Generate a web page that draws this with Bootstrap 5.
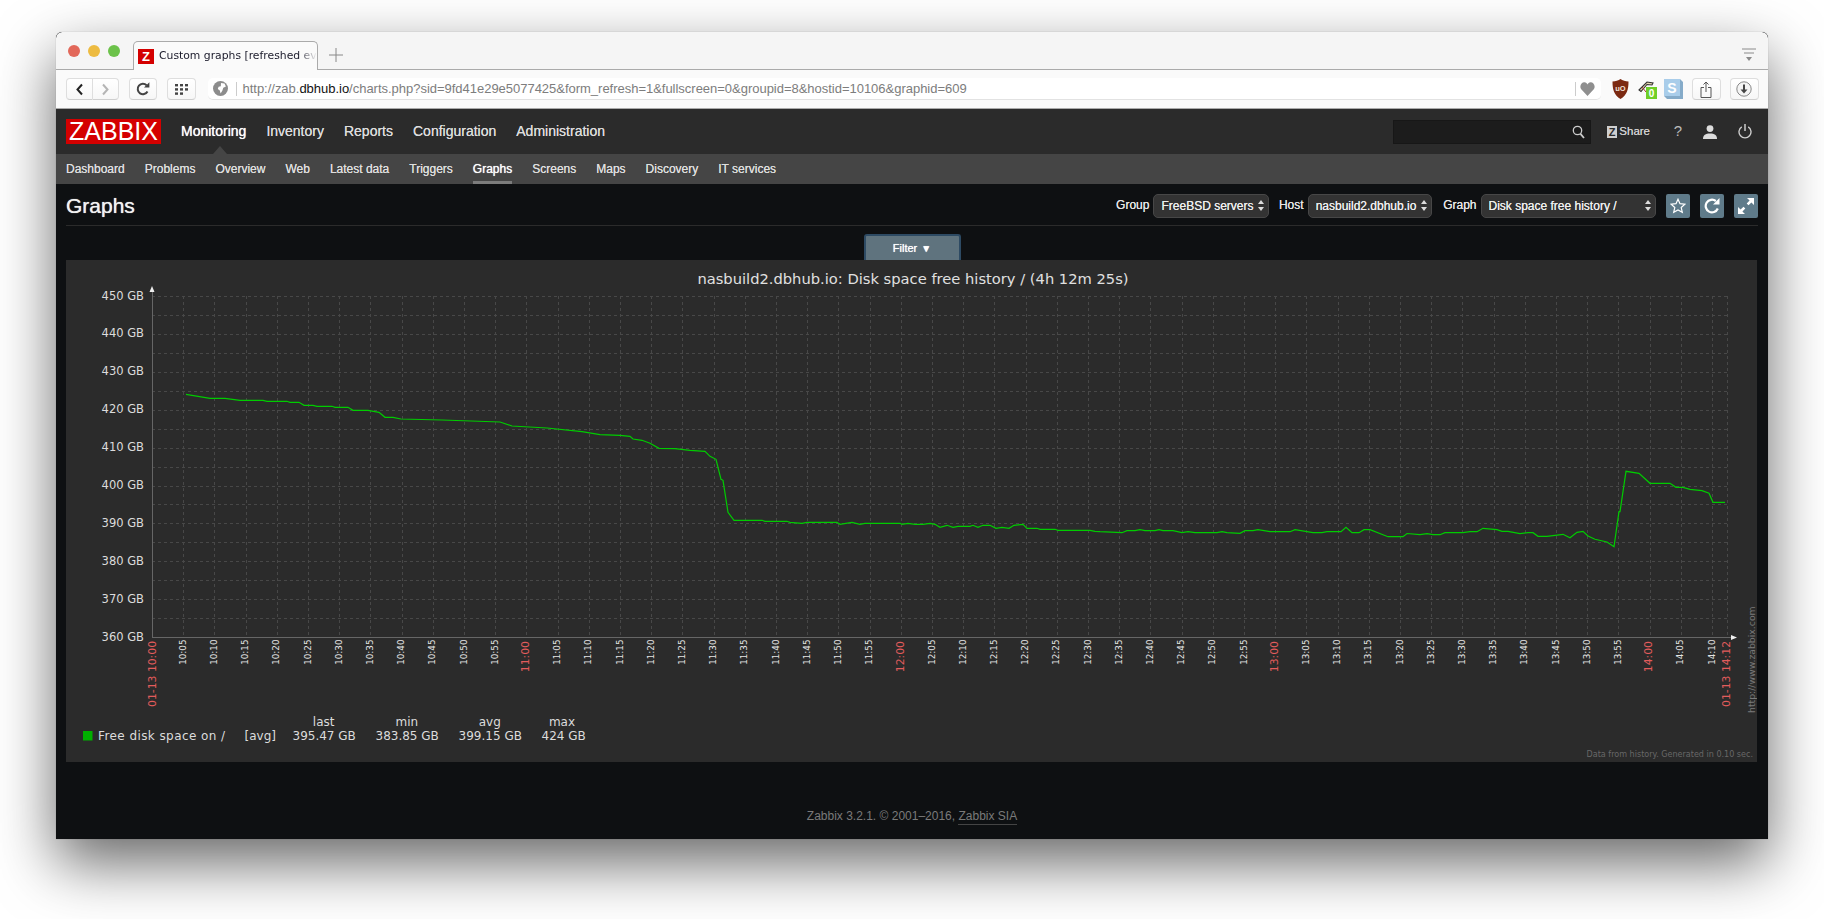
<!DOCTYPE html>
<html lang="en">
<head>
<meta charset="utf-8">
<title>Custom graphs</title>
<link href="https://cdn.jsdelivr.net/npm/bootstrap@5.3.0/dist/css/bootstrap.min.css" rel="stylesheet">
<style>
html,body{height:919px;overflow:hidden;background:#fff;font-family:"Liberation Sans",Arial,sans-serif}
.zwin{width:1712px;height:807px;margin:32px 0 0 56px;border-radius:6px 6px 0 0;box-shadow:0 24px 60px 0 rgba(0,0,0,.6),0 0 1px rgba(0,0,0,.4);background:#0e1012;overflow:hidden}
.ztabs{height:38px;background:#f5f5f5;border-bottom:1px solid #aaa;border-radius:6px 6px 0 0;padding-left:12px;position:relative}
.zdot{width:12px;height:12px;border-radius:50%;margin-right:8px}
.ztab{width:185px;height:29px;margin-left:5px;margin-bottom:-1px;background:#fafafa;border:1px solid #aaa;border-bottom:0;border-radius:5px 5px 0 0;align-self:flex-end;padding-left:4px;font-family:"DejaVu Sans",sans-serif;font-size:10.8px;color:#1a1a2a;overflow:hidden;white-space:nowrap}
.zfav{width:16px;height:15px;background:#d40000;color:#fff;font:bold 13px/15px "Liberation Sans",sans-serif;text-align:center;margin-right:5px;flex:none}
.zfade{width:158px;overflow:hidden;-webkit-mask-image:linear-gradient(90deg,#000 88%,transparent);mask-image:linear-gradient(90deg,#000 88%,transparent)}
.ztplus{margin-left:11px;margin-top:8px}
.ztmenu{margin-right:12px;margin-top:8px}
.ztbar{height:39px;background:#fafafa;border-bottom:1px solid #aaa;padding:0 9.5px 0 9.5px}
.zbtn{height:22px;background:linear-gradient(#fff,#f7f7f7);border:1px solid #dedede;border-bottom-color:#cfcfcf;border-radius:4px}
.zurl{height:22px;background:#fff;border-bottom:1px solid #e2e2e2;border-radius:5px;flex:1;font-size:13px;color:#7d7d7d;white-space:nowrap;margin:0 9px 0 12px;letter-spacing:-.02px}
.zurl b{font-weight:400;color:#111}
.zsep{width:1px;height:14px;background:#ccc}
.zhead{height:45px;background:#2b2b2b;padding:0 16px 0 10px}
.zlogo{width:95px;height:25px;background:#d40000;color:#fff;font-size:25px;line-height:25px;text-align:center;margin-right:20px}
.zmain a{color:#dcdcdc;font-size:14px;text-decoration:none;margin-right:20px;text-shadow:0 0 .6px #dcdcdc}
.zmain a.zon{color:#fff;text-shadow:0 0 .7px #fff}
.zsearch{width:198px;height:24px;background:#1c1c1c;border:1px solid #171717;margin-right:16px;padding-right:5px}
.zshare{font-size:11.5px;color:#cfcfcf;font-weight:400;text-shadow:0 0 .6px #cfcfcf;width:43px}
.zsz{background:#cfcfcf;color:#2b2b2b;font-weight:700;font-size:11px;line-height:12px;width:12px;height:12px;text-align:center;margin-right:2px;text-shadow:none}
.ztip{position:absolute;left:157px;top:37px;width:0;height:0;border:7.5px solid transparent;border-top:0;border-bottom:8px solid #454545}
.zsub{height:30px;background:#454545;padding-left:10px;position:relative}
.zsub a{color:#dedede;font-size:12px;text-decoration:none;margin-right:20px;height:30px;line-height:30px;text-shadow:0 0 .5px #dedede;padding-top:0}
.zsub a.zon{color:#fff;border-bottom:3px solid #7c7c7c;font-weight:400;text-shadow:0 0 .8px #fff}
.zbody{padding:0 10px;flex:1;min-height:0}
.ztitle{height:42px;border-bottom:1px solid #2b2b2b;color:#f2f2f2;padding-top:2px}
.ztitle h1{font-size:21px;font-weight:400;margin:0;line-height:1;text-shadow:0 0 .8px #f2f2f2}
.zlbl{font-size:12px;color:#e6e6e6;margin:-2px 4px 0 11px;text-shadow:0 0 .4px #e6e6e6}
.zlbl.zhostlbl{margin-left:9.5px}
.zsel.form-select{height:24px;min-height:24px;padding:0 0 0 7px;font-size:12px;line-height:22px;color:#eee;background-color:#333;background-image:url("data:image/svg+xml,%3Csvg xmlns='http://www.w3.org/2000/svg' width='6' height='11'%3E%3Cpath fill='%23ddd' d='M3 0l3 4H0zM3 11L0 7h6z'/%3E%3C/svg%3E");background-position:right 4px center;background-size:6px 11px;border:1px solid #474747;border-radius:5px;box-shadow:none;text-shadow:0 0 .3px #eee}
.zic{width:24px;height:24px;background:#5f7b8a;border-radius:2px;margin-left:10px;border:0;padding:0}
.zfilter{width:97px;height:26px;margin:8px auto 0;background:#5f737e;border:2px solid #2d4a63;border-bottom:0;border-radius:3px 3px 0 0;color:#fff;font-size:11px;line-height:24px;text-align:center;display:block;padding:0;text-shadow:0 0 .7px #fff}
.zfilter span{font-size:10px;margin-left:1px}
.zpanel{height:502px;width:1691px;background:#2b2b2b}
.zpanel svg{display:block}
.zpanel text{font-family:"DejaVu Sans",sans-serif}
.zfoot{height:77px;padding-top:47px;color:#7a7a7a;font-size:12px;line-height:15px}
.zfoot a{color:#7a7a7a;text-decoration:none;border-bottom:1px solid #444;height:16px}
</style>
</head>
<body>
<div class="zwin d-flex flex-column">
  <div class="ztabs d-flex align-items-center">
    <span class="zdot" style="background:#e2685a"></span><span class="zdot" style="background:#edbb41"></span><span class="zdot" style="background:#6cc24a"></span>
    <div class="ztab d-flex align-items-center"><span class="zfav">Z</span><span class="zfade">Custom graphs [refreshed ev</span></div>
    <svg class="ztplus" width="14" height="14" viewBox="0 0 14 14"><path d="M7 0v14M0 7h14" stroke="#888" fill="none"/></svg>
    <svg class="ms-auto ztmenu" width="14" height="14" viewBox="0 0 14 14"><path d="M0 1h14M2 5h10" stroke="#8a8a8a" fill="none"/><path d="M4 9h6l-3 4z" fill="#8a8a8a"/></svg>
  </div>
  <div class="ztbar d-flex align-items-center">
    <div class="d-flex">
      <span class="zbtn d-flex align-items-center justify-content-center" style="width:27px;border-radius:4px 0 0 4px"><svg width="9" height="13" viewBox="0 0 9 13"><path d="M7 1.5L2.5 6.5 7 11.5" stroke="#222" stroke-width="2" fill="none"/></svg></span>
      <span class="zbtn d-flex align-items-center justify-content-center" style="width:26.500px;border-left:0;border-radius:0 4px 4px 0"><svg width="9" height="13" viewBox="0 0 9 13"><path d="M2 1.5L6.5 6.5 2 11.5" stroke="#b5b5b5" stroke-width="2" fill="none"/></svg></span>
    </div>
    <span class="zbtn d-flex align-items-center justify-content-center" style="width:28.500px;margin-left:9.500px"><svg width="14" height="14" viewBox="0 0 14 14"><path d="M11.5 9.500A5.200 5.200 0 1 1 10.600 3.300" stroke="#444" stroke-width="2" fill="none"/><path d="M8 5.600h5.400V.2z" fill="#444"/></svg></span>
    <span class="zbtn d-flex align-items-center justify-content-center" style="width:29px;margin-left:9.500px"><svg width="13" height="11" viewBox="0 0 13 11" fill="#444"><rect width="3" height="2.400"/><rect x="5" width="3" height="2.400"/><rect x="10" width="3" height="2.400"/><rect y="4.200" width="3" height="2.400"/><rect x="5" y="4.200" width="3" height="2.400"/><rect x="10" y="4.200" width="3" height="2.400"/><rect y="8.400" width="3" height="2.400"/><rect x="5" y="8.400" width="3" height="2.400"/></svg></span>
    <div class="zurl d-flex align-items-center">
      <svg style="margin-left:5px;flex:none" width="15" height="15" viewBox="0 0 15 15"><circle cx="7.500" cy="7.500" r="7.500" fill="#8c8c8c"/><path d="M8 2l3.500.6 1.400 3-2.600 1.200-1 3-1.700 2.800-.8-3-2-1.500.8-2.300 2.200-.5z" fill="#fff"/></svg>
      <span class="zsep mx-2" style="flex:none"></span>
      <span class="flex-grow-1" style="margin-left:-2px">http://zab.<b>dbhub.io</b>/charts.php?sid=9fd41e29e5077425&amp;form_refresh=1&amp;fullscreen=0&amp;groupid=8&amp;hostid=10106&amp;graphid=609</span>
      <span class="zsep" style="flex:none"></span>
      <svg width="15" height="14" viewBox="0 0 15 14" style="flex:none;margin-left:4px;margin-right:6px"><path d="M7.500 14L1 7C-1 3.800 2 0 4.500 .3 6 .5 7 1.500 7.500 2.500 8 1.500 9 .5 10.500 .3 13 0 16 3.800 14 7z" fill="#8f8f8f"/></svg>
    </div>
    <svg width="17" height="20" viewBox="0 0 17 20" style="margin-left:2px"><path d="M8.500 0c2 1.500 5 2.200 8 2.500 0 8-1.500 13.500-8 17.500C2 16 .5 10.500.5 2.500 3.500 2.200 6.500 1.500 8.500 0z" fill="#7c2a12"/><text x="8.500" y="11.800" text-anchor="middle" font-size="7.500" font-weight="700" fill="#f3e2d8" font-family="Liberation Sans,sans-serif">uO</text></svg>
    <svg width="20" height="20" viewBox="0 0 20 20" style="margin-left:9px"><path d="M1 11L9 3l6 1-1 2-5-.5-6 7z" fill="#e8d8b0" stroke="#333" stroke-width="1.100"/><path d="M4 8l4 5" stroke="#a33" stroke-width="1"/><rect x="8" y="8" width="11" height="12" fill="#6fcf28"/><text x="13.500" y="18" font-size="10" text-anchor="middle" font-weight="700" fill="#fff" font-family="Liberation Sans,sans-serif">0</text></svg>
    <svg width="20" height="20" viewBox="0 0 20 20" style="margin-left:6px"><path d="M0 0h16l3 3v17H3l-3-3z" fill="#85abc9"/><rect width="16" height="17" fill="#a9cdea"/><text x="8" y="13.500" font-size="14" text-anchor="middle" font-weight="700" fill="#fff" font-family="Liberation Sans,sans-serif">S</text></svg>
    <span class="zbtn d-flex align-items-center justify-content-center" style="width:29px;margin-left:8px"><svg width="12" height="17" viewBox="0 0 12 17"><path d="M4 6.500H1v10h10v-10H8M6 11V1M3.500 3.500L6 1l2.500 2.500" stroke="#555" fill="none"/></svg></span>
    <span class="zbtn d-flex align-items-center justify-content-center" style="width:29px;margin-left:9px"><svg width="16" height="16" viewBox="0 0 16 16"><circle cx="8" cy="8" r="7.200" fill="#f4f4f4" stroke="#888"/><path d="M8 3.500v6" stroke="#444" stroke-width="2"/><path d="M4.500 8.500h7L8 12.500z" fill="#444"/></svg></span>
  </div>
  <div class="zhead d-flex align-items-center position-relative">
    <span class="zlogo">ZABBIX</span>
    <nav class="zmain d-flex">
      <a class="zon" href="#">Monitoring</a><a href="#">Inventory</a><a href="#">Reports</a><a href="#">Configuration</a><a href="#">Administration</a>
    </nav>
    <div class="zsearch d-flex align-items-center justify-content-end ms-auto"><svg width="13" height="14" viewBox="0 0 13 14"><circle cx="5.500" cy="5.500" r="4.200" stroke="#ccc" stroke-width="1.300" fill="none"/><path d="M8.500 8.800L12 13" stroke="#ccc" stroke-width="1.800"/></svg></div>
    <span class="zshare d-flex align-items-center"><span class="zsz">Z</span>Share</span>
    <span style="color:#bbb;font-size:15px;margin-left:23px;width:10px;text-align:center">?</span>
    <svg style="margin-left:20px" width="14" height="14" viewBox="0 0 14 14" fill="#dcdcdc"><circle cx="7" cy="3.600" r="3.400"/><path d="M0 14c0-4 2.500-5.500 7-5.500S14 10 14 14z"/></svg>
    <svg style="margin-left:21px" width="14" height="15" viewBox="0 0 14 15"><path d="M7 0v7" stroke="#ccc" stroke-width="1.500"/><path d="M3.800 2.800a6 6 0 1 0 6.400 0" stroke="#ccc" stroke-width="1.400" fill="none"/></svg>
    <span class="ztip"></span>
  </div>
  <nav class="zsub d-flex">
    <a href="#">Dashboard</a><a href="#">Problems</a><a href="#">Overview</a><a href="#">Web</a><a href="#">Latest data</a><a href="#">Triggers</a><a class="zon" href="#">Graphs</a><a href="#">Screens</a><a href="#">Maps</a><a href="#">Discovery</a><a href="#">IT services</a>
  </nav>
  <main class="zbody d-flex flex-column">
    <div class="ztitle d-flex align-items-center">
      <h1 class="flex-grow-1">Graphs</h1>
      <span class="zlbl">Group</span>
      <select class="zsel form-select" style="width:116px"><option>FreeBSD servers</option></select>
      <span class="zlbl zhostlbl">Host</span>
      <select class="zsel form-select" style="width:124.500px"><option>nasbuild2.dbhub.io</option></select>
      <span class="zlbl">Graph</span>
      <select class="zsel form-select" style="width:175.500px"><option>Disk space free history /</option></select>
      <button class="zic d-flex align-items-center justify-content-center" aria-label="Favourite"><svg width="16" height="16" viewBox="0 0 16 16"><path d="M8 1.200l2 4.500 4.900.5-3.700 3.300 1.100 4.800L8 12l-4.300 2.300 1.100-4.800L1.100 6.200 6 5.700z" fill="none" stroke="#fff" stroke-width="1.200"/></svg></button>
      <button class="zic d-flex align-items-center justify-content-center" aria-label="Refresh"><svg width="16" height="16" viewBox="0 0 16 16"><path d="M13.800 10.500A6.300 6.300 0 1 1 11.800 3" stroke="#fff" stroke-width="2.200" fill="none"/><path d="M9 6.500h6.500V0z" fill="#fff"/></svg></button>
      <button class="zic d-flex align-items-center justify-content-center" aria-label="Fullscreen"><svg width="16" height="16" viewBox="0 0 16 16" fill="#fff"><path d="M9 0h7v7l-2.600-2.600L10.500 7.300 8.700 5.500l2.900-2.900zM7 16H0V9l2.600 2.600 2.900-2.900 1.800 1.800-2.900 2.900z"/></svg></button>
    </div>
    <button class="zfilter">Filter <span>▼</span></button>
    <section class="zpanel"><svg id="zgraph" width="1691" height="502" viewBox="66 260 1691 502" xmlns="http://www.w3.org/2000/svg"></svg></section>
    <footer class="zfoot d-flex align-items-start justify-content-center">Zabbix 3.2.1. © 2001–2016,&nbsp;<a href="#">Zabbix SIA</a></footer>
  </main>
</div>
<script>
(function(){
var s='',i,x,y,gx,gy;
function T(txt,x,y,size,fill,anchor,extra){return '<text x="'+x+'" y="'+y+'" font-size="'+size+'" fill="'+fill+'" text-anchor="'+(anchor||'start')+'" '+(extra||'')+'>'+txt+'</text>';}
function R(txt,x,y,size,fill){return '<text transform="translate('+x+','+y+') rotate(-90)" dy=".35em" font-size="'+size+'" fill="'+fill+'" text-anchor="end">'+txt+'</text>';}
var G='#484848',RED='#e25c5c',W='#e4e4e4',CE='shape-rendering="crispEdges"';
for(i=0;i<=18;i++){y=296+i*18.95;gy=Math.round(y)+.5;if(i<18)s+='<path '+CE+' d="M152 '+gy+'H1727" stroke="'+G+'" stroke-dasharray="3 3"/>';
 if(i%2==0)s+=T((450-i*5)+'&#160;GB',144,y+3.5,11.5,'#dcdcdc','end');}
for(i=1;i<=50;i++){x=152+i*31.2;gx=Math.round(x)+.5;s+='<path '+CE+' d="M'+gx+' 296V637" stroke="'+G+'" stroke-dasharray="3 3"/>';
 var m=i*5,h=10+Math.floor(m/60),mm=m%60;var l=h+':'+(mm<10?'0':'')+mm;
 s+= mm==0 ? R(l,x-1,641,10.8,RED) : R(l,x-.5,639.5,8.8,W);}
s+='<path '+CE+' d="M1727.5 296V637" stroke="'+G+'" stroke-dasharray="3 3"/>';
s+='<path '+CE+' d="M152.5 289V637" stroke="#666"/><path '+CE+' d="M152 637.500H1733" stroke="#666"/><path d="M149.500 292h5L152 286z" fill="#eee"/><path d="M1731 635v5L1737 637.500z" fill="#eee"/>';
s+=R('01-13 10:00',152,641,10.8,RED)+R('01-13 14:12',1726,641,10.8,RED);
var p="186,394.3 210,398.3 225,398.3 240,400.3 263,400.3 267,401.3 287,401.3 290,402.3 299,402.3 304,405.3 313,405.3 317,406.3 332,406.3 335,407.3 348,407.3 353,410.3 368,410.3 379,412.3 385,417.3 393,417.3 401,419 442,420 500,422 512,426 547,428 582,431.6 600,434.7 620,435.3 630,436.3 633,439 642,440.3 650,443.3 659,448.3 675,448.7 690,450.3 705,451.3 710,456.3 716,459.3 721,479.3 723,480.3 728,512.3 734,520.3 762,520.3 765,521.3 787,521.3 790,522.3 802,523.3 807,522.3 837,522.3 840,524.3 852,522.3 860,524.3 865,523.3 900,523.3 902,524.3 908,523.3 915,524.3 923,524.3 930,523.3 935,524.3 940,527.3 947,525.3 953,527.3 958,526.3 970,526.3 973,525.3 978,527.3 983,525.3 990,525.3 996,528.3 1002,527.3 1009,528.3 1014,525.3 1023,524.3 1027,528.3 1037,528.3 1040,529.3 1055,529.3 1058,530.3 1090,530.3 1095,531.3 1100,531.7 1122,532.7 1127,530.7 1135,530.7 1140,529.7 1145,530.7 1155,530.7 1159,529.7 1163,530.7 1173,530.7 1182,532.7 1188,531.7 1195,532.7 1217,532.7 1222,531.7 1227,532.7 1240,533.3 1245,530.7 1253,530.7 1258,529.7 1270,531.7 1290,531.7 1295,529.7 1313,532.7 1322,532.7 1327,531.7 1341,531.7 1346,527.3 1352,532.7 1359,532.7 1364,529.7 1370,529.7 1388,536.7 1403,536.7 1407,533.5 1420,534.7 1427,533.7 1433,534.7 1440,534.7 1445,532.7 1463,532.7 1470,531.7 1477,531.7 1483,528.3 1497,529.7 1502,531.3 1508,531.3 1520,533.7 1528,532.7 1533,532.7 1538,536.3 1547,536.3 1563,534.3 1570,537.7 1577,532.3 1583,531.3 1588,536 1595,539.3 1607,542 1614,546.7 1619,511.7 1620,511.7 1626,471.3 1639,473.3 1650,483.3 1670,483.3 1676,487.3 1683,487.3 1690,489.3 1702,490.7 1709,493.3 1713,502.3 1725,502.3";
s+='<polyline points="'+p+'" fill="none" stroke="#00cc00" stroke-width="1.200"/>';
s+=T('nasbuild2.dbhub.io: Disk space free history / (4h 12m 25s)',913,284,14.7,'#e0e0e0','middle');
s+='<rect x="83" y="731" width="9.500" height="9.500" fill="#00b000"/>';
s+=T('Free disk space on /',98,740,12,'#dcdcdc','start','letter-spacing=".42"')+T('[avg]',244.5,740,12,'#dcdcdc');
[['last',323.7,'395.47 GB',292.5],['min',406.8,'383.85 GB',375.5],['avg',489.8,'399.15 GB',458.6],['max',562,'424 GB',541.6]].forEach(function(c){
 s+=T(c[0],c[1],726,12,'#dcdcdc','middle')+T(c[2],c[3],740,12,'#dcdcdc');});
s+='<text transform="translate(1752,713) rotate(-90)" dy=".35em" font-size="9.3" fill="#7a7a7a">http://www.zabbix.com</text>';
s+=T('Data from history. Generated in 0.10 sec.',1753,756.5,8.05,'#686868','end');
document.getElementById('zgraph').innerHTML=s;
})();
</script>
<script src="https://cdn.jsdelivr.net/npm/bootstrap@5.3.0/dist/js/bootstrap.bundle.min.js"></script>
</body>
</html>
